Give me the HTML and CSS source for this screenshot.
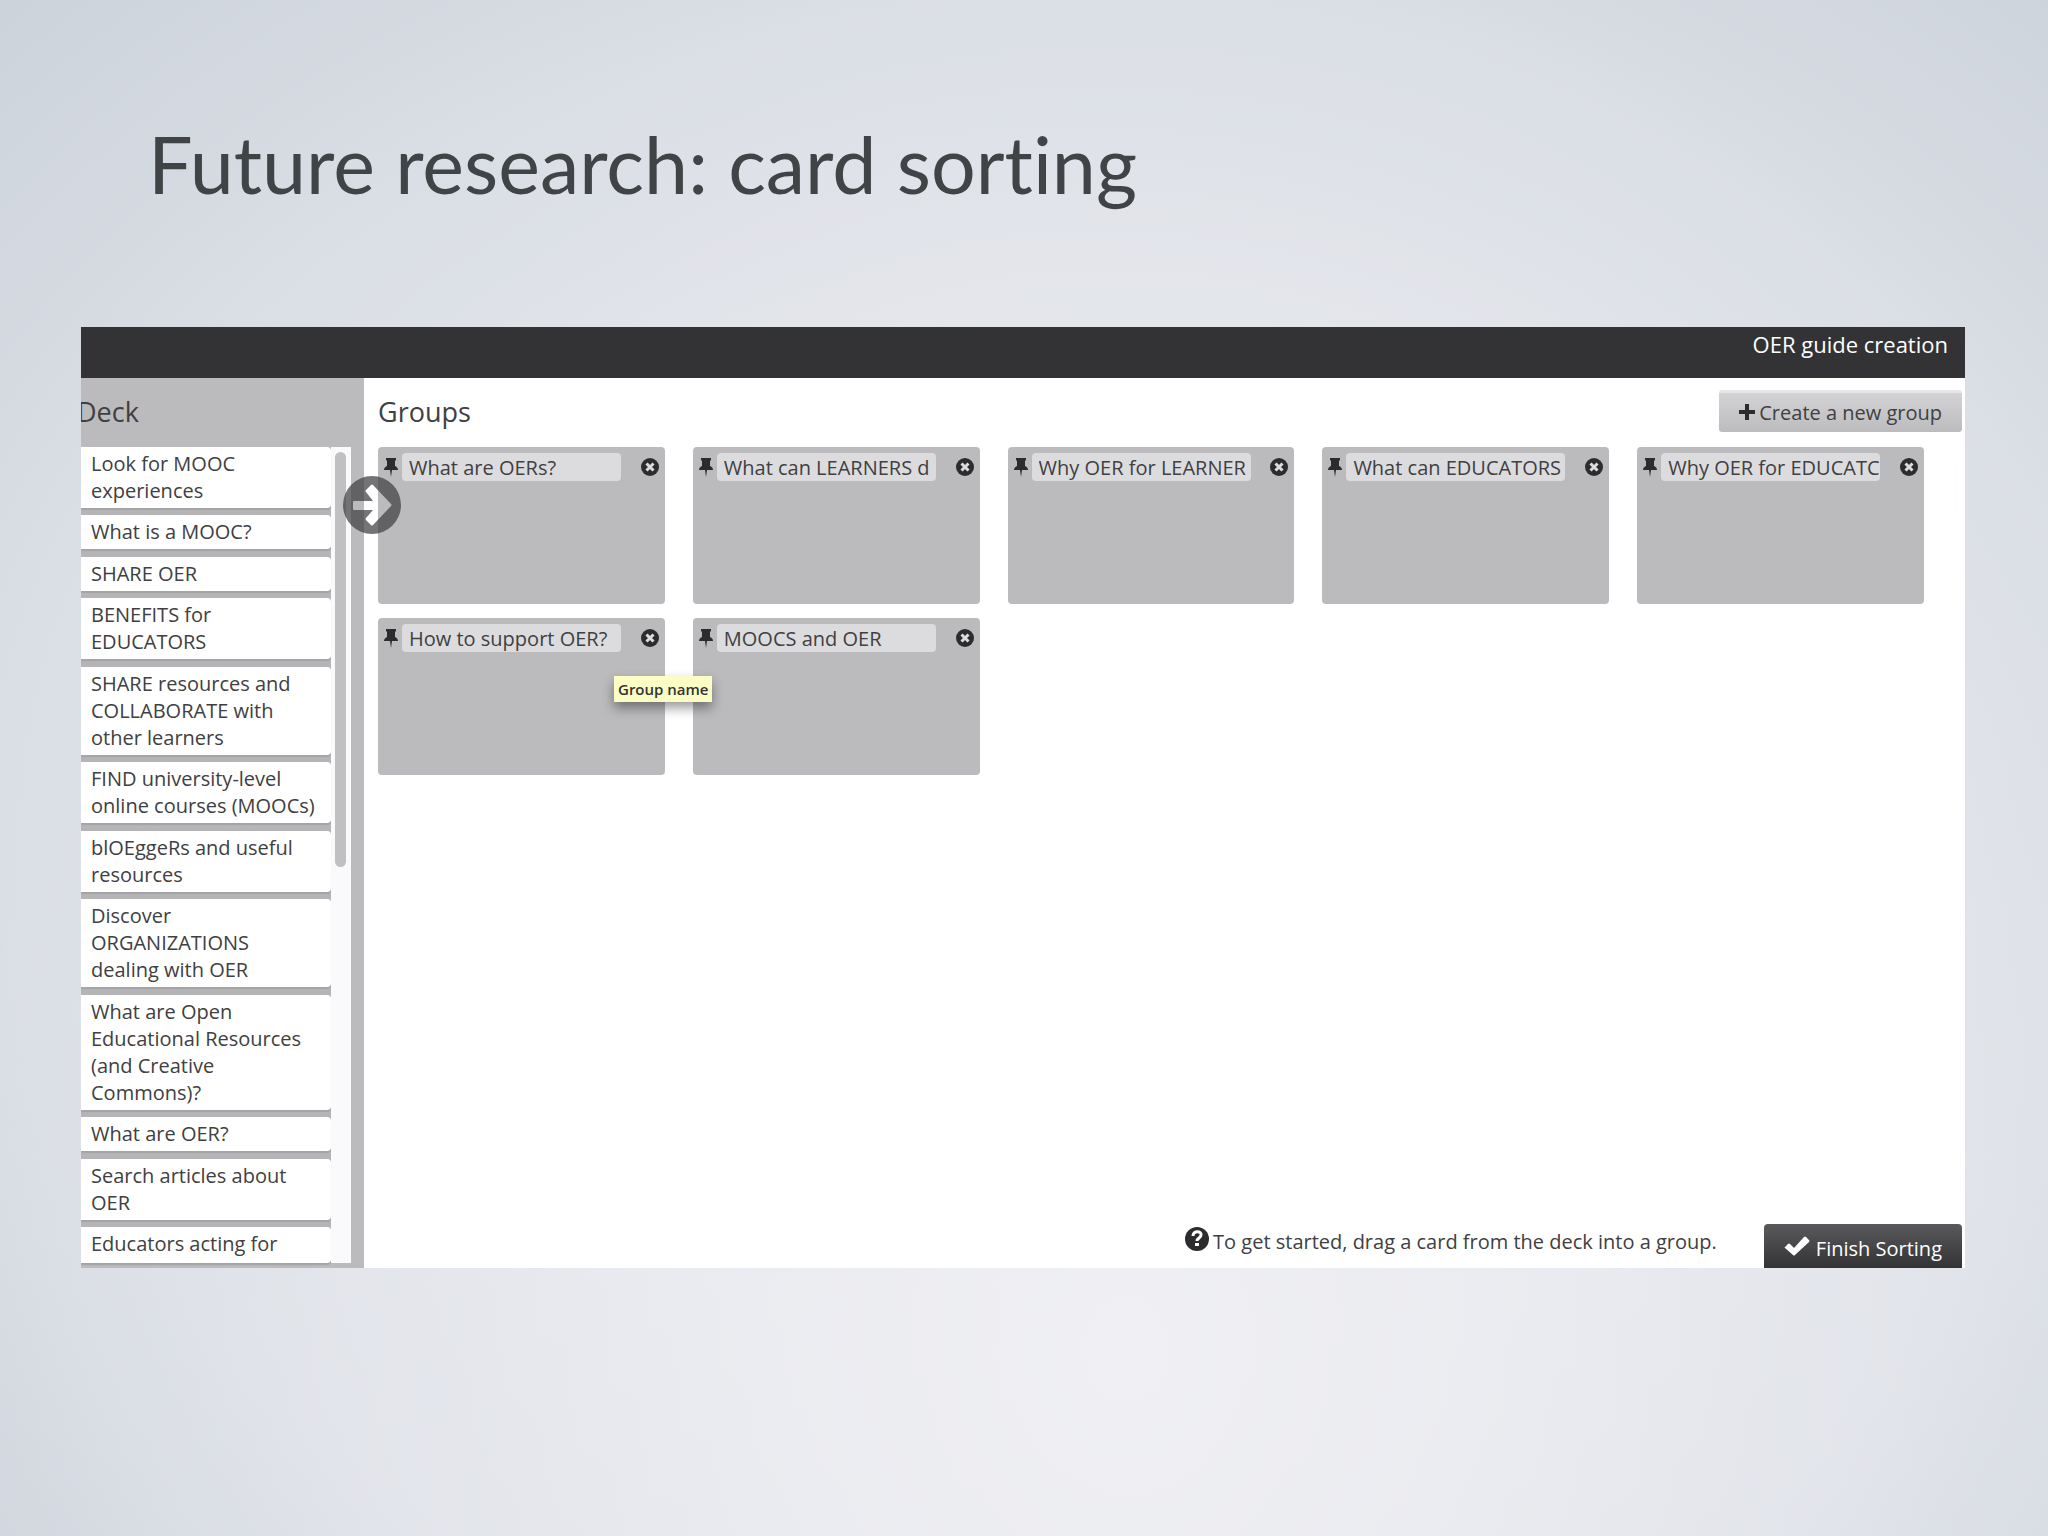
FILE: index.html
```
<!DOCTYPE html>
<html lang="en">
<head>
<meta charset="utf-8">
<title>Future research: card sorting</title>
<link rel="stylesheet" href="styles.css">
</head>
<body>
<svg class="sprite" aria-hidden="true">
  <symbol id="pin" viewBox="0 0 14 20"><path d="M2 1h10v2l-1 1v5c2 1 3 2 3 4H8l-1 7-1-7H0c0-2 1-3 3-4V4L2 3z"/></symbol>
  <symbol id="close" viewBox="0 0 18 18"><circle cx="9" cy="9" r="9"/><path d="M5.500 5.500l7 7M12.500 5.500l-7 7" stroke="#dcdcde" stroke-width="3"/></symbol>
</svg>
<main class="slide">
  <h1 class="slide-title">Future research: card sorting</h1>
  <section class="app">
    <header class="topbar">OER guide creation</header>
    <div class="workspace">
      <aside class="deck">
        <h2 class="heading deck-heading">Deck</h2>
        <div class="deck-body">
          <ul class="cards">
            <li class="card">Look for MOOC<br>experiences</li>
            <li class="card">What is a MOOC?</li>
            <li class="card">SHARE OER</li>
            <li class="card">BENEFITS for<br>EDUCATORS</li>
            <li class="card">SHARE resources and<br>COLLABORATE with<br>other learners</li>
            <li class="card">FIND university-level<br>online courses (MOOCs)</li>
            <li class="card">blOEggeRs and useful<br>resources</li>
            <li class="card">Discover<br>ORGANIZATIONS<br>dealing with OER</li>
            <li class="card">What are Open<br>Educational Resources<br>(and Creative<br>Commons)?</li>
            <li class="card">What are OER?</li>
            <li class="card">Search articles about<br>OER</li>
            <li class="card">Educators acting for</li>
          </ul>
          <div class="track"><div class="thumb"></div></div>
        </div>
        <button class="expand" type="button" aria-label="Expand deck">
          <svg viewBox="0 0 58 58"><path fill-rule="evenodd" d="M29 0a29 29 0 0 1 0 58a29 29 0 0 1 0-58zM11 25q-1 0-1 1v7q0 1 1 1h19l-7 8q-1 1 0 2l5 5q1 1 2 0l18-19q1-1 0-2L30 9q-1-1-2 0l-5 5q-1 1 0 2l7 9z"/></svg>
        </button>
      </aside>
      <section class="groups">
        <div class="groups-head">
          <h2 class="heading">Groups</h2>
          <button class="create" type="button"><svg class="plus" viewBox="0 0 16 16"><path d="M6 0h4v6h6v4h-6v6H6v-6H0V6h6z"/></svg>Create a new group</button>
        </div>
        <div class="grid">
          <div class="group"><svg class="pin"><use href="#pin"/></svg><input class="name" aria-label="Group name" value="What are OERs?"><button class="close" type="button" aria-label="Remove group"><svg><use href="#close"/></svg></button></div>
          <div class="group"><svg class="pin"><use href="#pin"/></svg><input class="name" aria-label="Group name" value="What can LEARNERS d"><button class="close" type="button" aria-label="Remove group"><svg><use href="#close"/></svg></button></div>
          <div class="group"><svg class="pin"><use href="#pin"/></svg><input class="name" aria-label="Group name" value="Why OER for LEARNER"><button class="close" type="button" aria-label="Remove group"><svg><use href="#close"/></svg></button></div>
          <div class="group"><svg class="pin"><use href="#pin"/></svg><input class="name" aria-label="Group name" value="What can EDUCATORS"><button class="close" type="button" aria-label="Remove group"><svg><use href="#close"/></svg></button></div>
          <div class="group"><svg class="pin"><use href="#pin"/></svg><input class="name" aria-label="Group name" value="Why OER for EDUCATC"><button class="close" type="button" aria-label="Remove group"><svg><use href="#close"/></svg></button></div>
          <div class="group"><svg class="pin"><use href="#pin"/></svg><input class="name" aria-label="Group name" value="How to support OER?"><button class="close" type="button" aria-label="Remove group"><svg><use href="#close"/></svg></button><span class="tooltip" role="tooltip">Group name</span></div>
          <div class="group"><svg class="pin"><use href="#pin"/></svg><input class="name" aria-label="Group name" value="MOOCS and OER"><button class="close" type="button" aria-label="Remove group"><svg><use href="#close"/></svg></button></div>
        </div>
        <footer class="footer">
          <p class="hint"><svg class="help" viewBox="0 0 24 24"><circle cx="12" cy="12" r="12"/><path d="M8 9c0-6 9-5 8-1 0 3-4 3-4 6" fill="none" stroke="#fff" stroke-width="3"/><path d="M10 16h4v3h-4z" fill="#fff"/></svg>To get started, drag a card from the deck into a group.</p>
          <button class="finish" type="button"><svg class="check" viewBox="0 0 26 20"><path d="M1 11l3-3q1-1 2 0l4 4L20 1q1-1 2 0l3 3q1 1 0 2L11 19q-1 1-2 0l-8-7q-1-1 0-1z"/></svg>Finish Sorting</button>
        </footer>
      </section>
    </div>
  </section>
</main>
</body>
</html>
```
FILE: styles.css
```
* { box-sizing: border-box; }
body {
  margin: 0;
  min-height: 100vh;
  font-family: "Open Sans", "Noto Sans", sans-serif;
  font-size: 20px;
  line-height: 27px;
  color: #404042;
  background:
    radial-gradient(ellipse at 55% 88%, #f0f0f4 0%, rgba(240, 240, 244, 0) 75%),
    radial-gradient(ellipse at 52% 55%, #e8e9ed 0%, #dadee5 70%, #ccd3db 100%);
}
h1, h2, p, ul { margin: 0; padding: 0; font-weight: 400; }
button, input { font: inherit; color: inherit; border: 0; margin: 0; }
svg { display: block; fill: #2c2c2e; }
.sprite { position: absolute; width: 0; height: 0; }

.slide { padding: 114px 83px 268px 81px; }
.slide-title {
  padding-left: 67px;
  margin-bottom: 113px;
  font-family: "Gill Sans", Lato, sans-serif;
  font-size: 79px;
  line-height: 100px;
  font-variant-ligatures: none;
  color: #404447;
}
.app { background: #fff; overflow: hidden; }
.topbar {
  height: 51px;
  padding: 4px 17px;
  font-size: 22px;
  text-align: right;
  color: #fff;
  background: #333335;
}
.workspace { display: flex; height: 890px; }
.heading { font-size: 27px; line-height: 40px; }

.deck {
  position: relative;
  z-index: 1;
  flex: 0 0 283px;
  display: flex;
  flex-direction: column;
  padding: 14px 13px 5px 0;
  background: #bbbbbd;
}
.deck-heading { margin: 0 0 15px -4px; }
.deck-body { flex: 1; display: flex; min-height: 0; background: #fff; }
.cards {
  flex: 1;
  display: flex;
  flex-direction: column;
  justify-content: space-between;
  list-style: none;
  background: #b5b5b7;
}
.card {
  padding: 3px 10px 4px;
  white-space: nowrap;
  background: #fff;
  border-radius: 0 4px 4px 0;
  box-shadow: 0 2px 1px #a4a4a6;
}
.card:last-child { padding-bottom: 6px; }
.track { width: 20px; padding: 5px 4px; background: #fafafc; }
.thumb { width: 11px; height: 415px; border-radius: 6px; background: #c0c0c2; }
.expand {
  position: absolute;
  top: 98px;
  right: -37px;
  width: 58px;
  height: 58px;
  padding: 0;
  background: none;
}
.expand svg { fill: rgba(68, 68, 70, 0.74); }

.groups { flex: 1; display: flex; flex-direction: column; padding-left: 14px; }
.groups-head {
  display: flex;
  justify-content: space-between;
  align-items: flex-start;
  padding: 14px 3px 15px 0;
}
.create {
  height: 42px;
  display: flex;
  align-items: center;
  gap: 4px;
  padding: 0 20px 1px;
  margin: -2px 0 0;
  border-radius: 3px;
  border-top: 3px solid #e6e6e8;
  background: linear-gradient(#d3d3d5, #bcbcbe);
}
.plus { width: 16px; height: 16px; }
.grid {
  display: grid;
  grid-template-columns: repeat(5, 1fr);
  gap: 14px 28px;
  padding-right: 41px;
}
.group {
  position: relative;
  height: 157px;
  display: flex;
  align-items: flex-start;
  padding: 6px;
  border-radius: 4px;
  background: #bbbbbd;
}
.pin { width: 14px; height: 20px; margin: 4px 4px 0 0; }
.name {
  width: 219px;
  height: 28px;
  padding: 0 0 0 7px;
  border-radius: 4px;
  background: #dcdcde;
}
.close { margin: 5px 0 0 auto; padding: 0; background: none; }
.close svg { width: 18px; height: 18px; }
.tooltip {
  position: absolute;
  left: 236px;
  top: 58px;
  padding: 0 4px;
  font-size: 15px;
  font-weight: 600;
  line-height: 26px;
  white-space: nowrap;
  color: #333;
  background: #fbfdc5;
  box-shadow: 0 6px 12px rgba(0, 0, 0, 0.4);
  z-index: 1;
}
.footer {
  margin-top: auto;
  display: flex;
  justify-content: flex-end;
  gap: 47px;
  padding-right: 3px;
}
.hint { display: flex; gap: 4px; padding-top: 4px; }
.help { width: 24px; height: 24px; margin-top: -1px; }
.finish {
  display: flex;
  align-items: center;
  gap: 6px;
  height: 44px;
  padding: 4px 20px 0;
  border-radius: 4px 4px 0 0;
  color: #fff;
  background: linear-gradient(#5a5a5c, #333335);
}
.check { width: 26px; height: 20px; margin-bottom: 4px; fill: #fff; }
```
